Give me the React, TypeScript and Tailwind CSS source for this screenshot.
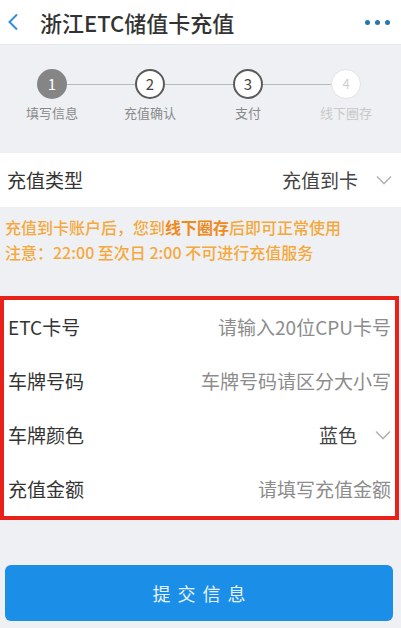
import React from "react";

const font = { fontFamily: '"Noto Sans CJK SC", "Noto Sans", sans-serif' };

function Chevron() {
  return (
    <svg width="16" height="10" viewBox="0 0 16 10" className="ml-[18px]">
      <path d="M1 1.5 L8 8.5 L15 1.5" fill="none" stroke="#b5b5b5" strokeWidth="1.6" />
    </svg>
  );
}

function Row({ label, value, dark, chevron }: { label: string; value: string; dark?: boolean; chevron?: boolean }) {
  return (
    <div className="flex h-[54px] items-center justify-between pl-[2px] pr-[2px]">
      <span className="text-[19px] text-[#333]">{label}</span>
      <div className="flex items-center">
        <span className={dark ? "text-[19px] text-[#444]" : "text-[19px] text-[#8c8c8c]"}>{value}</span>
        {chevron && <Chevron />}
      </div>
    </div>
  );
}

export default function App() {
  const steps = [
    { n: "1", label: "填写信息", kind: "done" },
    { n: "2", label: "充值确认", kind: "next" },
    { n: "3", label: "支付", kind: "next" },
    { n: "4", label: "线下圈存", kind: "off" },
  ];
  return (
    <div className="w-[401px] h-[628px] bg-[#eef0f4] overflow-hidden" style={font}>
      {/* header */}
      <div className="h-[45px] bg-white flex items-center pl-[7px] pr-[11px] border-b border-[#e4e6ea]">
        <svg width="12" height="18" viewBox="0 0 12 18">
          <path d="M10 1.5 L2.5 9 L10 16.5" fill="none" stroke="#2f8fd8" strokeWidth="2" />
        </svg>
        <span className="ml-[21px] text-[22px] leading-none text-[#333] font-medium">浙江ETC储值卡充值</span>
        <div className="ml-auto flex gap-[5px]">
          <span className="w-[5px] h-[5px] rounded-full bg-[#2576b3]" />
          <span className="w-[5px] h-[5px] rounded-full bg-[#2576b3]" />
          <span className="w-[5px] h-[5px] rounded-full bg-[#2576b3]" />
        </div>
      </div>

      {/* stepper */}
      <div className="h-[108px] pt-[24px]">
        <div className="flex items-center pl-[37px]">
          {steps.map((s, i) => (
            <React.Fragment key={s.n}>
              {s.kind === "done" && (
                <div className="w-[30px] h-[30px] rounded-full bg-[#858585] flex items-center justify-center text-white text-[15px]">
                  {s.n}
                </div>
              )}
              {s.kind === "next" && (
                <div className="w-[30px] h-[30px] rounded-full bg-white border-2 border-[#5a5a5a] flex items-center justify-center text-[#444] text-[15px]">
                  {s.n}
                </div>
              )}
              {s.kind === "off" && (
                <div className="w-[30px] h-[30px] rounded-full bg-white border border-[#e2e2e2] flex items-center justify-center text-[#cfcfcf] text-[13px]">
                  {s.n}
                </div>
              )}
              {i < 3 && <div className="w-[68px] h-[1px] bg-[#b9b9b9]" />}
            </React.Fragment>
          ))}
        </div>
        <div className="grid grid-cols-[98px_98px_98px_98px] ml-[3px] mt-[4px]">
          {steps.map((s) => (
            <span
              key={s.n}
              className={
                s.kind === "off"
                  ? "text-center text-[13px] text-[#c9c9c9]"
                  : "text-center text-[13px] text-[#8a8a8a]"
              }
            >
              {s.label}
            </span>
          ))}
        </div>
      </div>

      {/* recharge type */}
      <div className="h-[54px] bg-white flex items-center justify-between pl-[7px] pr-[9px]">
        <span className="text-[19px] text-[#333]">充值类型</span>
        <div className="flex items-center">
          <span className="text-[19px] text-[#444]">充值到卡</span>
          <Chevron />
        </div>
      </div>

      {/* notice */}
      <div className="pl-[5px] pt-[8px] text-[16px] leading-[25px] font-medium text-[#f5a93c]">
        <div>
          充值到卡账户后，您到<span className="text-[#f08a1c] font-bold">线下圈存</span>后即可正常使用
        </div>
        <div>注意：22:00 至次日 2:00 不可进行充值服务</div>
      </div>

      {/* red box form */}
      <div className="mt-[31px] w-[399px] bg-white border-4 border-[#e8221b] pl-[2px] pr-[2px]">
        <Row label="ETC卡号" value="请输入20位CPU卡号" />
        <Row label="车牌号码" value="车牌号码请区分大小写" />
        <Row label="车牌颜色" value="蓝色" dark chevron />
        <Row label="充值金额" value="请填写充值金额" />
      </div>

      {/* submit */}
      <div className="px-[5px] pr-[8px] mt-[45px]">
        <button className="w-full h-[56px] rounded-[6px] bg-[#1b8ee8] text-[#e8f3fd] text-[18px] tracking-[7px] pl-[7px]">
          提交信息
        </button>
      </div>
    </div>
  );
}
